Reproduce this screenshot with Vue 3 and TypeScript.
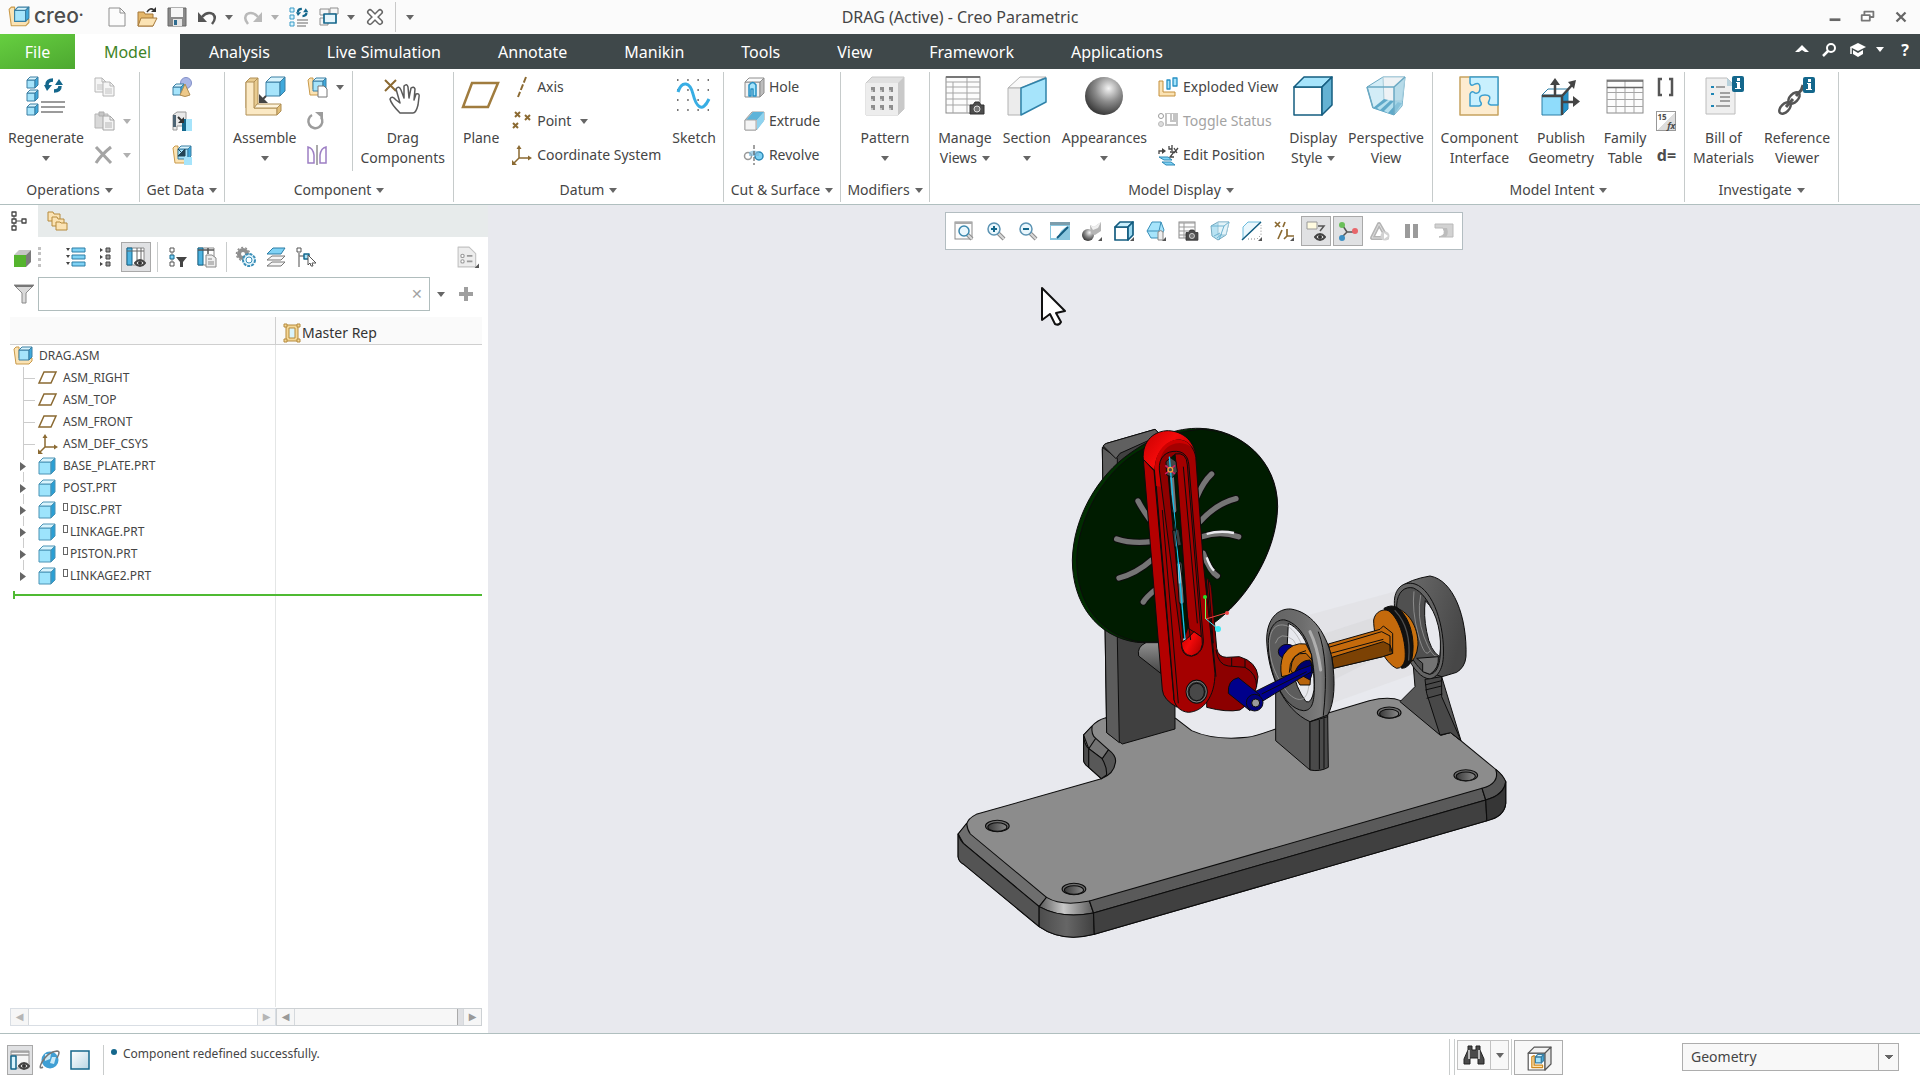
<script setup lang="ts">
import { h, ref } from 'vue'

/* ---------- icon building blocks ---------- */
type Pal = { f: string; t: string; s: string; k: string }
const BLUE: Pal = { f: '#a6e4fb', t: '#d9f4fd', s: '#3fa9dc', k: '#3a7fa3' }
const TAN: Pal = { f: '#fbe9c4', t: '#fdf3dc', s: '#e0bd78', k: '#b08f55' }
const GREY: Pal = { f: '#f1f1f1', t: '#fafafa', s: '#bdbdbd', k: '#8e8e8e' }
const GREEN: Pal = { f: '#55b42e', t: '#c6c6c6', s: '#7b7b7b', k: 'none' }

const cube = (x: number, y: number, s: number, d: number, p: Pal, w = 1) =>
  `<g stroke="${p.k}" stroke-width="${w}" stroke-linejoin="round">` +
  `<path fill="${p.f}" d="M${x} ${y + d}h${s - d}v${s - d}h${d - s}z"/>` +
  `<path fill="${p.t}" d="M${x} ${y + d}l${d} ${-d}h${s - d}l${-d} ${d}z"/>` +
  `<path fill="${p.s}" d="M${x + s - d} ${y + d}l${d} ${-d}v${s - d}l${-d} ${d}z"/></g>`
const line = (d: string, c = '#555', w = 1, extra = '') =>
  `<path d="${d}" fill="none" stroke="${c}" stroke-width="${w}" ${extra}/>`
const fill = (d: string, c: string, k = 'none', w = 1) =>
  `<path d="${d}" fill="${c}" stroke="${k}" stroke-width="${w}" stroke-linejoin="round"/>`
const lens = (mark: string) =>
  line('M12 12l6 6', '#8d8d8d', 4) + line('M12 12l6 6', '#d8d8d8', 2) +
  `<circle cx="8" cy="8" r="6" fill="#eaf7fd" stroke="#5b93b3" stroke-width="1.5"/>` + mark
const corner = fill('M20 20v-4l-4 4z', '#555')
const page = (x: number, y: number) =>
  fill(`M${x} ${y}h7l4 4v10h-11z`, '#f3f3f3', '#a6a6a6') + line(`M${x + 7} ${y}v4h4`, '#a6a6a6') +
  line(`M${x + 2} ${y + 7}h7M${x + 2} ${y + 9}h7M${x + 2} ${y + 11}h7`, '#b4b4b4')
const camera = (x: number, y: number) =>
  fill(`M${x} ${y + 3}h3l2-3h4l2 3h3v9h-14z`, '#4d4d4d', '#333') +
  `<circle cx="${x + 7}" cy="${y + 7}" r="3" fill="#777" stroke="#ddd"/>`
const eye = (x: number, y: number) =>
  fill(`M${x} ${y}q5-6 10 0q-5 6-10 0z`, '#fff', '#444', 2) + `<circle cx="${x + 5}" cy="${y}" r="2" fill="#333"/>`
const asm = (x: number, y: number, s: number) =>
  fill(`M${x} ${y + 2}l2-2h3v${s - 7}h${s - 7}l2 0v3l-3 3h-${s - 5}z`, '#fbe3b4', '#c99a4a') +
  cube(x + 5, y, s - 5, 3, BLUE)
const arrows =
  line('M3 8Q3 3 9 3', '#14678c', 3.5) + fill('M0 8h8L3 14z', '#14678c') +
  line('M16 9Q16 14 10 14', '#14678c', 3.5) + fill('M11 8h8L15 2z', '#14678c')
const sync = (x: number, y: number, k = 1) => `<g transform="translate(${x} ${y}) scale(${k})">${arrows}</g>`
const info = (x: number, y: number) =>
  `<rect x="${x}" y="${y}" width="12" height="16" rx="2" fill="#14678c"/>` +
  fill(`M${x + 5} ${y + 2}h3v3h-3zM${x + 4} ${y + 6}h4v6h1v1h-6v-1h2v-5h-1z`, '#fff')
const table = (x: number, y: number, w: number, hh: number) =>
  `<rect x="${x}" y="${y}" width="${w}" height="${hh}" fill="#fcfcfc" stroke="#8a8a8a"/>`
const csys = (w: number) =>
  line('M7 2v11h11M7 13l-6 6', '#8b6a32', w) + fill('M4.500 4l2.500-4 2.500 4zM16 10.500l4 2.500-4 2.500zM0 20v-5l5 5z', '#8b6a32')
const glass =
  fill('M1 5l7-4h11l-3 13-8 5-6-4z', '#b9e3f3', '#76a9bf') + fill('M8 1h11l-3 13h-8z', '#e3f3f9', '#9cc5d6') +
  line('M1 5h13l5-4M14 5l-5 14M4 15l6-3M7 17l5-4', '#6fb4d1')

const large: Record<string, string> = {
  regenerate:
    cube(1, 1, 11, 3, BLUE) + cube(1, 14, 11, 3, BLUE) + cube(1, 28, 11, 3, BLUE) + sync(18, 1) +
    line('M15 26h24M15 31h24M15 36h22', '#9b9b9b', 2),
  assemble:
    fill('M1 6l4-4h8v26l-3 4H1z', '#e8cb90', '#b08f55') + fill('M1 6h8v26h23v7H1z', '#fbe9c4', '#b08f55') +
    fill('M9 32l3-4h24l-4 4z', '#fdf3dc', '#b08f55') + fill('M32 32l4-4v7l-4 4z', '#e0bd78', '#b08f55') + line('M9 6l4-4', '#b08f55') +
    cube(21, 1, 19, 5, BLUE) + line('M21 20l-4 4', '#444', 2) + fill('M14 18v9h9z', '#444'),
  drag:
    line('M2 4l11 11M13 4L2 15', '#8b6a32', 2) +
    fill('M17 37q-9-9-10-14q2-4 6 1l4 3l-4-14q3-4 5 1l3 8v-12q3-3 4 1l1 11l2-10q3-2 4 1l-1 11l2-6q4-1 3 3l-1 8q-2 8-5 8z', '#fff', '#5a5a5a', 1.5),
  plane: line('M11 7h26L27 31H2z', '#a07c3e', 2.5),
  sketch:
    line('M3 4h32M3 14h32M3 24h32M3 34h32', '#444', 1.5, 'stroke-dasharray="1.500 8.700"') +
    line('M4 16C8 4 16 6 19 18S28 38 35 23', '#38aee4', 3),
  pattern:
    fill('M1 7l6-6h32v32l-6 6H1z', '#e0e0e0', '#c8c8c8') + fill('M33 7l6-6v32l-6 6z', '#c9c9c9') + fill('M1 7h32v32H1z', '#ededed') +
    [11, 20, 29].map(y => [6, 15, 24].map(x => fill(`M${x} ${y}h4v5h-4z`, '#8e8e8e') + fill(`M${x} ${y + 3}h2v2h-2z`, '#c4c4c4')).join('')).join(''),
  views:
    table(1, 1, 34, 36) + line('M1 6h34M1 11h34M1 17h34M1 23h34M1 29h34M8 6v31M22 1v36', '#a5a5a5') +
    line('M1 1h34', '#777', 2) + camera(25, 26),
  section:
    fill('M1 12L13 1h26L14 12z', '#f9f9f9', '#b2b2b2') + fill('M1 12h13v27H1z', '#ececec', '#b2b2b2') +
    fill('M14 12L39 2v24L14 39z', '#a6e4fb', '#2f82a9', 1.5),
  appearances: '<circle cx="20" cy="20" r="19" fill="url(#g-ball)"/>',
  display: cube(1, 1, 38, 10, { f: '#fff', t: '#a6e4fb', s: '#64b2d3', k: '#155d80' }, 1.5),
  perspective:
    fill('M1 11L17 1h22l-3 29-8 9L7 32z', '#d3edf7', '#6ba9c3') + fill('M17 1h22l-3 24H18z', '#eef2f5', '#a9cbd8') +
    fill('M7 32l11-9 18 4-8 12z', '#5fa9c9') + fill('M11 32l11-8h3L14 34zM18 35l10-10 4 1-10 11z', '#b4dfee') +
    fill('M28 11L39 1l-3 29-8 9z', '#9ccfe3aa') + line('M1 11h27L39 1M28 11v28M1 11l6 21', '#6ba9c3', 1.500),
  interface:
    fill('M1 1h38v38H1z', '#fdecd0', '#c6a35f', 1.5) +
    fill('M11 1h28v28h-7q-4-1-2-4q3-6-4-6t-5 6q3 4-1 5h-9V18q2-4 5-1q5 1 5-5t-5-4q-4 3-5-1z', '#c9f0fe', '#3b9fd0', 1.5),
  publish:
    cube(1, 13, 26, 6, { f: '#8fdcfb', t: '#fff', s: '#2592c9', k: '#2a7ea6' }) +
    line('M14 20V6M1 20h20M21 20L32 8M21 26h14M21 20v19', '#444', 2.5) +
    fill('M9 9l5-7 5 7zM27 6l8-2-2 9zM32 20l7 5.500-7 5.500z', '#444'),
  family:
    table(2, 4, 36, 33) + line('M2 16.500h36M2 23.500h36M2 30.500h36M11 11v26M20 4v33M29 11v26', '#a5a5a5') +
    line('M2 5h36M2 11.500h36', '#666', 1.500),
  bill:
    fill('M2 2h21l8 8v28H2z', '#efefef', '#bcbcbc') + fill('M23 2v8h8z', '#b9d2dc') + info(28, 0) +
    line('M12 11h9M16 17h10M16 21h10M16 25h10M12 30h14', '#888', 1.5) + fill('M7 10h3v2H7zM7 17h3v2H7zM7 29h3v2H7z', '#1e85b5'),
  reference:
    '<g fill="none" stroke="#555" stroke-width="2.5"><ellipse cx="8" cy="32" rx="7" ry="4" transform="rotate(-45 8 32)"/><ellipse cx="17" cy="22" rx="7" ry="4" transform="rotate(-45 17 22)"/></g>' +
    line('M9 31l7-8M19 20l7-8M24 15l2-6', '#555', 3) + info(26, 1),
}

const small: Record<string, string> = {
  copy: `<g opacity=".8">${page(1, 1)}${page(9, 5)}</g>`,
  paste: fill('M1 3h13v14H1z', '#d9d9d9', '#b5b5b5') + fill('M5 1h5v4H5z', '#c6c6c6', '#adadad') + page(9, 5),
  delete: line('M2 2l15 16M17 2Q7 10 2 18', '#a4a4a4', 3),
  shapes: '<circle cx="14" cy="6" r="5.500" fill="#aab6e6" stroke="#8390c8"/>' + cube(1, 7, 11, 3, BLUE) + fill('M13 7l5 11q-5 3-10 0z', '#edc98a', '#b08f55'),
  shrink: fill('M1 4l4-3h9v14H5v4H1z', '#e9e9e9', '#999') + fill('M1 4h3v12H1z', '#4d6474') + fill('M10 8h10v12H10z', '#a6e4fb') + fill('M10 8h4v12h-4z', '#14678c') + line('M6 6l5 5', '#333', 2) + fill('M12 6v6H6z', '#333'),
  importasm: asm(1, 1, 18) + fill('M12 12h8v8h-8z', '#a6e4fb') + fill('M13 4v7H6zM6 4l4 4', '#245', '#245'),
  create: asm(1, 1, 18) + fill('M11 9h6l3 3v8h-9z', '#fff', '#777'),
  repeat: line('M5 4A7 7 0 1 0 14 6', '#9c9c9c', 2.5) + fill('M8 1h8v7z', '#9c9c9c'),
  mirror: line('M10 0v20', '#555') + line('M1 2q5 1 6 8v8H1zM19 2q-5 1-6 8v8h6z', '#9d7fc4', 1.5),
  axis: line('M14 0L6 20', '#8b6a32', 2, 'stroke-dasharray="6 2"'),
  point: line('M3 1l5 5M8 1L3 6M13 4l5 5M18 4l-5 5M1 12l5 5M6 12l-5 5', '#8b6a32', 2),
  csys: csys(1.5),
  hole: cube(1, 1, 19, 4, GREY) + fill('M5 8q4-5 7 0v11H9v-7H7v7H5z', '#a6e4fb', '#2690c4', 1.5),
  extrude: fill('M1 9L8 1h12v8l-8 10H1z', '#d5d5d5', '#9a9a9a') + fill('M2 9l7-8h11l-7 8z', '#5db3d9') + fill('M13 9l7-8v9l-7 9z', '#8fd3ef') + fill('M1 9h11v10H1z', '#f4f4f4', '#a8a8a8'),
  revolve: '<circle cx="4" cy="11" r="3.500" fill="#fff" stroke="#999" stroke-width="1.500"/><circle cx="15" cy="11" r="4" fill="#7fd2f5" stroke="#2c88b5" stroke-width="1.500"/>' + fill('M5 7q5-3 10 0v4H5z', '#7cb9d9aa') + line('M10 0v20', '#444', 1, 'stroke-dasharray="4 2"'),
  exploded: fill('M1 4h4v11h12v4H1z', '#fbe3b4', '#c4903c') + fill('M9 3h3v9H9zM15 1h4v8h-4z', '#a6e4fb', '#2690c4', 1.3),
  toggle: '<circle cx="3" cy="5" r="2.500" fill="none" stroke="#999"/><circle cx="3" cy="13" r="2.500" fill="#ddd" stroke="#bbb"/>' + fill('M7 2h13v13H7z', '#c4c4c4') + fill('M9 3v10h9v-2h-6V3zM14 3h1v6h-1z', '#fff'),
  editpos: line('M1 9V6h4M11 1v3h3M14 0v6M12 7h4l-4 5h4M16 3l3 5M20 3l-4 5', '#444', 1.3) + fill('M4 3l4 3-4 3z', '#444') + fill('M1 12h9l4 3H6zM4 17h9l4 3H8z', '#7fd2f5', '#2c88b5'),
  brackets: line('M6 2H3v16h3M13 2h3v16h-3', '#555', 2.5),
  expand: [3, 10, 17].map(y => fill(`M6 ${y - 2}h13v4H6z`, '#7fd2f5', '#2c7da5') + fill(`M0 ${y - 2}h4l-2 3z`, '#444')).join(''),
  collapse: [3, 10, 17].map(y => fill(`M10 ${y - 2}h4v4h-4z`, '#999', '#444') + fill(`M4 ${y - 2}l3 2-3 2z`, '#444')).join(''),
  columns: fill('M1 1h17v17H1z', '#fff', '#888') + fill('M1 1h5v17H1z', '#4fb3e0', '#14678c') + line('M1 4h17M11 1v12M15 1v12', '#666', 1) + eye(9, 16),
  filterTree: fill('M3 1h4v4H3zM3 15h4v4H3z', '#fff', '#555') + fill('M3 8h4v4H3z', '#7fd2f5', '#14678c') + line('M5 5v3M5 12v3', '#777') + fill('M9 10h11l-4 5v5h-3v-5z', '#444'),
  columnsPage: fill('M1 1h16v17H1z', '#fff', '#888') + fill('M1 1h5v17H1z', '#4fb3e0', '#14678c') + line('M1 3h16M11 1v6', '#555', 1.5) + fill('M9 8h6l4 3v9H9z', '#eee', '#888') + line('M11 12h4M11 15h6M11 17h6', '#888'),
  gears: '<circle cx="7" cy="7" r="4" fill="none" stroke="#8f8f8f" stroke-width="4"/><circle cx="7" cy="7" r="6.500" fill="none" stroke="#8f8f8f" stroke-width="1.500" stroke-dasharray="2 2"/><circle cx="13" cy="13" r="6" fill="#e2f5fd" stroke="#3b8fb8" stroke-width="2" stroke-dasharray="3 1"/><circle cx="13" cy="13" r="3" fill="#fff" stroke="#3b8fb8"/>',
  layers: fill('M1 19l5-4h13l-4 4z', '#f6f6f6', '#777') + fill('M1 13l5-4h13l-4 4z', '#f6f6f6', '#777') + fill('M1 7l6-6h12l-4 6z', '#7fd2f5', '#2c7da5'),
  selectTree: line('M3 6v14M3 9h6', '#888', 1.5) + fill('M1 1h4v4H1z', '#fff', '#555') + fill('M8 7h5v5H8z', '#a6e4fb', '#14678c', 1.5) + fill('M12 8l8 8-4 0 1 3-2 0-1-3-2 2z', '#fff', '#555'),
  settings: fill('M1 1h10l6 6v12H1z', '#ededed', '#c2c2c2') + line('M9 9h5M9 14h5', '#999', 1.5) + '<circle cx="5" cy="9" r="1.500" fill="#fff" stroke="#999"/><circle cx="5" cy="14" r="1.500" fill="#fff" stroke="#999"/>' + corner,
  greencube: cube(1, 3, 17, 5, GREEN, 0),
  funnel: fill('M0 1h20l-8 8v10H8V9z', '#dadada', '#8a8a8a') + line('M1 2h18', '#777', 2),
  plus: line('M10 3v14M3 10h14', '#9f9f9f', 4),
  folders: fill('M1 1h5l1 2h6v7H1z', '#fbe3b4', '#b58a3c') + fill('M5 6h5l1 2h6v7H5z', '#fbe3b4', '#b58a3c') + fill('M9 11h4l1 1h6v7H9z', '#fbe3b4', '#b58a3c'),
  treeTab: line('M5 5v11M5 10h9', '#555', 1) + fill('M3 1h4v4H3zM3 8h4v4H3zM3 15h4v4H3zM13 8h4v4h-4z', '#fff', '#444', 1.3),
  master: fill('M4 2h12v16H4z', '#f5d795', '#b58a3c') + fill('M7 5h6v10H7z', '#d9f4fd', '#b58a3c') + fill('M2 1h3v3H2zM15 1h3v3h-3zM2 16h3v3H2zM15 16h3v3h-3z', '#f5d795', '#b58a3c'),
  asm: asm(0, 1, 18),
  planeS: line('M6 4h12l-5 11H1z', '#8b6a32', 1.5),
  part: cube(1, 2, 16, 4, { f: '#9de4fc', t: '#d9f4fd', s: '#2b9fd4', k: '#4a93b5' }),
  zoomfit: table(1, 1, 17, 17) + line('M1 2h17', '#aaa', 2) + line('M13 13l5 5', '#8d8d8d', 4) + line('M13 13l5 5', '#d8d8d8', 2) + '<circle cx="10" cy="10" r="5" fill="#eaf7fd" stroke="#3a87ad" stroke-width="1.500"/>',
  zoomin: lens(line('M8 5v6M5 8h6', '#14678c', 2)),
  zoomout: lens(line('M5 8h6', '#14678c', 2)),
  repaint: fill('M0 1h20v18H0z', '#8ac6de') + fill('M0 1h20v3H0z', '#7c9dac') + fill('M1 5h17Q10 8 8 17H1z', '#fff') + line('M18 6L7 17', '#145d80', 2),
  shading: '<circle cx="6" cy="14" r="6" fill="url(#g-ball)"/>' + fill('M8 4l4 2 7-5v9l-6 4q-5 0-5-10z', '#b5b5b5') + fill('M8 4l4 2 7-5-3 6-5 2z', '#f0f0f0') + corner,
  dstyle: cube(1, 1, 18, 5, { f: '#fff', t: '#c9effc', s: '#9bd8f0', k: '#145d80' }, 1.7) + corner,
  orient: fill('M1 10L6 1h9l3 8-4 8H5z', '#a6e4fb', '#3b8fb8') + line('M1 10h12l2-9M13 10l1 7', '#3b8fb8') + fill('M12 11q3-3 5 0v8h-5z', '#eee', '#888') + corner,
  viewmgr: table(1, 1, 16, 16) + line('M1 2h16M1 6h16M1 10h16M1 14h16M6 2v15', '#999', 1) + `<g transform="translate(8 9) scale(.85)">${camera(0, 0)}</g>`,
  persp: glass,
  secview: fill('M1 6l5-5h13L1 18z', '#eaf7fd', '#6bbbdc') + line('M0 19L19 1', '#145d80', 1.5) + line('M6 18h9l4-4V4', '#888', 1, 'stroke-dasharray="1 2"') + corner,
  datumflt: line('M1 1l5 5M6 1L1 6M11 1L9 6M8 9l-4 9M13 8v7h7M13 15l-3 3', '#8b6a32', 1.700) + corner,
  annot: fill('M1 1h10v7H1z', '#fffbe0', '#999') + line('M12 5h6l-4 5', '#555', 1.5) + eye(9, 16),
  spin: line('M5 5l4 6M9 11l-5 5M9 11h8', '#555', 1.5) + '<circle cx="4" cy="4" r="3" fill="#6abf59"/><circle cx="4" cy="17" r="3" fill="#3d8fc4"/><circle cx="17" cy="10" r="3" fill="#e8666a"/>',
  simulate: line('M9 3L2 17h15z', '#b5b5b5', 4, 'stroke-linejoin="round"') + line('M9 3L2 17h15z', '#dedede', 1) + '<circle cx="15" cy="15" r="4.500" fill="#d2d2d2"/>' + fill('M14 12l4 3-4 3z', '#fff'),
  pause: fill('M3 3h5v14H3zM11 3h5v14h-5z', '#9b9b9b'),
  stress: fill('M1 3h18v13H5q8-2 4-9H1z', '#d2d2d2', '#bababa') + fill('M5 16q8-2 4-9h4q2 6-1 9z', '#bcbcbc'),
  new: fill('M2 1h11l5 5v13H2z', '#fcfcfc', '#8e8e8e') + line('M13 1v5h5', '#8e8e8e'),
  open: fill('M1 5h6l1 2h8v12H1z', '#e4b76b', '#a5793a') + fill('M4 11h16l-4 8H1z', '#fbe3b4', '#a5793a') + line('M10 5q3-5 7-2', '#333', 1.5) + fill('M14 5h5V0z', '#333'),
  save: fill('M1 1h18v18H1z', '#8a8a8a', '#666') + fill('M4 1h12v9H4z', '#f6f6f6') + fill('M6 12h9v7H6z', '#e5e5e5') + fill('M7 13h3v5H7z', '#2f6c90'),
  undo: line('M5 10Q10 4 16 7Q20 11 15 17', '#555', 2.5) + fill('M1 5v10h9z', '#555'),
  redo: line('M15 10Q10 4 4 7Q0 11 5 17', '#b9b9b9', 2.5) + fill('M19 5v10h-9z', '#b9b9b9'),
  regen: fill('M1 1h4v4H1zM1 8h4v4H1zM1 15h4v4H1z', '#d9f4fd', '#3a9bc7') + sync(7, 0, 0.65) + line('M8 13h11M8 16h11M8 19h9', '#999', 1.3),
  windows: fill('M1 2h9v6H1zM1 11h8v7H1zM11 1h8v6h-8z', '#f6f6f6', '#8e8e8e') + fill('M5 7h12v9H5z', '#e7f6fc', '#14678c', 1.7),
  closeWin: line('M5 5l10 10M15 5L5 15', '#666', 6, 'stroke-linecap="round"') + line('M5 5l10 10M15 5L5 15', '#fff', 3, 'stroke-linecap="round"'),
  logo: asm(1, 1, 18),
  up: fill('M3 12l7-7 7 7h-4l-3-2-3 2z', '#fff'),
  magnify: line('M3 16l5-5', '#fff', 2.500) + '<circle cx="11" cy="8" r="4" fill="none" stroke="#fff" stroke-width="2"/>',
  learn: fill('M2 7l8-4 8 4-8 4zM5 10l5 3 5-3v4l-5 3-5-3z', '#fff') + line('M3 7v7', '#fff', 1.5),
  min: line('M4 13h12', '#666', 3),
  restore: fill('M6 4h10v6H6z', '#fff', '#777', 2) + fill('M3 8h9v6H3z', '#fff', '#777', 2),
  close: line('M5 5l10 10M15 5L5 15', '#666', 2.500),
  navigator: fill('M1 1h18v17H1z', '#f5f5f5', '#999') + line('M1 2h18M1 5h18', '#999', 1.5) + fill('M1 6h5v13H1z', '#d9f4fd', '#14678c', 1.5) + eye(9, 16),
  globe: '<circle cx="10" cy="10" r="8.500" fill="#3f9fd4"/>' + fill('M5 4l6 0-1 5-5 2zM12 7l4 0-2 7-4-1z', '#c9e9f7') + line('M3 17Q-2 20 2 12Q8 2 17 1Q21 1 17 8', '#777', 1.500),
  screen: '<rect x="1" y="1" width="18" height="18" fill="url(#g-screen)" stroke="#14678c" stroke-width="1.500"/>',
  binoculars: fill('M4 1h4v4h4V1h4v4l4 9v5h-6v-6H6v6H0v-5l4-9z', '#4a4a4a', '#222') + line('M5 5v9M15 5v9', '#b5b5b5', 2),
  selbox: cube(1, 1, 19, 5, { f: '#fff', t: '#f2f2f2', s: '#e2e2e2', k: '#555' }) + fill('M4 9l2-1v8h7v2H4z', '#fbe3b4', '#d08a20') + cube(7, 7, 7, 2, BLUE),
}

const Icon = (p: { name: string; big?: boolean; size?: number }) => {
  const box = p.big ? 40 : 20
  const px = p.size ?? box
  return h('svg', {
    viewBox: `0 0 ${box} ${box}`, width: px, height: px, class: 'icon', 'aria-hidden': 'true',
    innerHTML: (p.big ? large : small)[p.name] ?? '',
  })
}
Icon.props = { name: String, big: Boolean, size: Number }

/* ---------- ribbon ---------- */
interface Item { icon: string; text?: string; name?: string; caret?: boolean; off?: boolean; glyph?: string }
interface Big { kind: 'big'; icon: string; lines: string[]; caret?: boolean }
interface Col { kind: 'col'; items: Item[] }
interface Sep { kind: 'sep' }
interface Group { key: string; title: string; parts: (Big | Col | Sep)[] }
const big = (icon: string, lines: string[], caret = false): Big => ({ kind: 'big', icon, lines, caret })
const col = (...items: Item[]): Col => ({ kind: 'col', items })

const groups: Group[] = [
  { key: 'operations', title: 'Operations', parts: [big('regenerate', ['Regenerate'], true),
    col({ icon: 'copy', name: 'Copy', off: true }, { icon: 'paste', name: 'Paste', caret: true, off: true }, { icon: 'delete', name: 'Delete', caret: true, off: true })] },
  { key: 'data', title: 'Get Data', parts: [
    col({ icon: 'shapes', name: 'User-Defined Feature' }, { icon: 'shrink', name: 'Copy Geometry' }, { icon: 'importasm', name: 'Shrinkwrap' })] },
  { key: 'component', title: 'Component', parts: [big('assemble', ['Assemble'], true),
    col({ icon: 'create', name: 'Create', caret: true }, { icon: 'repeat', name: 'Repeat', off: true }, { icon: 'mirror', name: 'Mirror Component' }),
    { kind: 'sep' }, big('drag', ['Drag', 'Components'])] },
  { key: 'datum', title: 'Datum', parts: [big('plane', ['Plane']),
    col({ icon: 'axis', text: 'Axis' }, { icon: 'point', text: 'Point', caret: true }, { icon: 'csys', text: 'Coordinate System' }),
    big('sketch', ['Sketch'])] },
  { key: 'cut', title: 'Cut & Surface', parts: [col({ icon: 'hole', text: 'Hole' }, { icon: 'extrude', text: 'Extrude' }, { icon: 'revolve', text: 'Revolve' })] },
  { key: 'modifiers', title: 'Modifiers', parts: [big('pattern', ['Pattern'], true)] },
  { key: 'display', title: 'Model Display', parts: [big('views', ['Manage', 'Views'], true), big('section', ['Section'], true), big('appearances', ['Appearances'], true),
    col({ icon: 'exploded', text: 'Exploded View' }, { icon: 'toggle', text: 'Toggle Status', off: true }, { icon: 'editpos', text: 'Edit Position' }),
    big('display', ['Display', 'Style'], true), big('perspective', ['Perspective', 'View'])] },
  { key: 'intent', title: 'Model Intent', parts: [big('interface', ['Component', 'Interface']), big('publish', ['Publish', 'Geometry']), big('family', ['Family', 'Table']),
    col({ icon: 'brackets', name: 'Parameters' }, { icon: 'relations', name: 'Switch Dimensions', glyph: 'fx' }, { icon: 'dequals', name: 'Relations', glyph: 'd=' })] },
  { key: 'investigate', title: 'Investigate', parts: [big('bill', ['Bill of', 'Materials']), big('reference', ['Reference', 'Viewer'])] },
]

const tabs = ['File', 'Model', 'Analysis', 'Live Simulation', 'Annotate', 'Manikin', 'Tools', 'View', 'Framework', 'Applications']
const activeTab = ref('Model')

const viewTools = [
  ['zoomfit', 'Refit'], ['zoomin', 'Zoom In'], ['zoomout', 'Zoom Out'], ['repaint', 'Repaint'], ['shading', 'Rendering'],
  ['dstyle', 'Display Style'], ['orient', 'Saved Orientations'], ['viewmgr', 'View Manager'], ['persp', 'Perspective'],
  ['secview', 'Sections'], ['datumflt', 'Datum Display'], ['annot', 'Annotation Display'], ['spin', 'Spin Center'],
  ['simulate', 'Simulate'], ['pause', 'Pause'], ['stress', 'Results'],
]
const pressed = ref(['annot', 'spin'])

/* ---------- model tree ---------- */
interface Node { name: string; icon: string; expand?: boolean; placed?: boolean }
const nodes: Node[] = [
  { name: 'ASM_RIGHT', icon: 'planeS' }, { name: 'ASM_TOP', icon: 'planeS' }, { name: 'ASM_FRONT', icon: 'planeS' },
  { name: 'ASM_DEF_CSYS', icon: 'csys' },
  { name: 'BASE_PLATE.PRT', icon: 'part', expand: true }, { name: 'POST.PRT', icon: 'part', expand: true },
  { name: 'DISC.PRT', icon: 'part', expand: true, placed: true }, { name: 'LINKAGE.PRT', icon: 'part', expand: true, placed: true },
  { name: 'PISTON.PRT', icon: 'part', expand: true, placed: true }, { name: 'LINKAGE2.PRT', icon: 'part', expand: true, placed: true },
]
const search = ref('')
const filter = ref('Geometry')

/* curved slots cut through the disc */
const slots = [
  'M470 262Q490 215 515 192', 'M480 335Q530 280 588 266', 'M485 380Q540 362 596 380', 'M490 430Q510 485 532 498',
  'M330 330Q305 295 294 273', 'M335 395Q275 402 230 387', 'M335 450Q290 490 237 504', 'M345 540Q320 560 310 576',
]
const holes = [[155, 438], [362, 627], [1214, 98], [1421, 286]]
</script>

<template>
  <div class="app">
    <svg width="0" height="0" class="defs" aria-hidden="true">
      <defs>
        <radialGradient id="g-ball" cx=".62" cy=".3" r=".7"><stop offset="0" stop-color="#f4f4f4" /><stop offset=".5" stop-color="#8d8d8d" /><stop offset="1" stop-color="#3c3c3c" /></radialGradient>
        <linearGradient id="g-screen" x2="1" y2="1"><stop offset="0" stop-color="#fff" /><stop offset="1" stop-color="#b9d6e4" /></linearGradient>
      </defs>
    </svg>

    <header class="title-bar">
      <div class="quick">
        <Icon name="logo" :size="22" />
        <span class="brand">creo<sup>•</sup></span>
        <button aria-label="New"><Icon name="new" /></button>
        <button aria-label="Open"><Icon name="open" /></button>
        <button aria-label="Save"><Icon name="save" /></button>
        <button class="drop" aria-label="Undo"><Icon name="undo" /><i class="caret" /></button>
        <button class="drop" aria-label="Redo" disabled><Icon name="redo" /><i class="caret" /></button>
        <button aria-label="Regenerate"><Icon name="regen" /></button>
        <button class="drop" aria-label="Windows"><Icon name="windows" /><i class="caret" /></button>
        <button aria-label="Close window"><Icon name="closeWin" /></button>
        <button class="customize" aria-label="Customize toolbar"><i class="caret" /></button>
      </div>
      <h1>DRAG (Active) - Creo Parametric</h1>
      <div class="window-buttons">
        <button aria-label="Minimize"><Icon name="min" :size="18" /></button>
        <button aria-label="Restore"><Icon name="restore" :size="18" /></button>
        <button aria-label="Close"><Icon name="close" :size="18" /></button>
      </div>
    </header>

    <nav class="tabs">
      <button v-for="t in tabs" :key="t" :class="{ file: t === 'File', active: t === activeTab }" @click="activeTab = t">{{ t }}</button>
      <div class="tab-tools">
        <button aria-label="Minimize ribbon"><Icon name="up" /></button>
        <button aria-label="Search commands"><Icon name="magnify" /></button>
        <button class="drop" aria-label="Learning"><Icon name="learn" /><i class="caret" /></button>
        <button class="help" aria-label="Help">?</button>
      </div>
    </nav>

    <section class="ribbon">
      <div v-for="g in groups" :key="g.key" :class="['group', g.key]">
        <div class="parts">
          <template v-for="(p, i) in g.parts" :key="i">
            <button v-if="p.kind === 'big'" class="big">
              <Icon :name="p.icon" big />
              <span class="lines">
                <span>{{ p.lines[0] }}</span>
                <span v-if="p.lines[1] || p.caret">{{ p.lines[1] }}<i v-if="p.caret" class="caret" /></span>
              </span>
            </button>
            <div v-else-if="p.kind === 'col'" class="col">
              <button v-for="it in p.items" :key="it.icon" :disabled="it.off" :aria-label="it.name">
                <span v-if="it.glyph" :class="['glyph', it.icon]">
                  <template v-if="it.icon === 'relations'"><small>15</small><em>fx</em></template>
                  <template v-else>{{ it.glyph }}</template>
                </span>
                <Icon v-else :name="it.icon" />
                <span v-if="it.text">{{ it.text }}</span>
                <i v-if="it.caret" class="caret" />
              </button>
            </div>
            <span v-else class="divider" />
          </template>
        </div>
        <button class="group-title">{{ g.title }}<i class="caret" /></button>
      </div>
    </section>

    <main class="work">
      <aside class="panel">
        <div class="panel-tabs">
          <button class="on" aria-label="Model Tree"><Icon name="treeTab" /></button>
          <button aria-label="Folder Browser"><Icon name="folders" /></button>
        </div>
        <div class="panel-tools">
          <button aria-label="Model"><Icon name="greencube" /></button>
          <span class="grip" />
          <button class="first" aria-label="Expand All"><Icon name="expand" /></button>
          <button aria-label="Collapse All"><Icon name="collapse" /></button>
          <button class="pressed" aria-label="Show Columns"><Icon name="columns" /></button>
          <span class="rule" />
          <button aria-label="Tree Filters"><Icon name="filterTree" /></button>
          <button aria-label="Tree Columns"><Icon name="columnsPage" /></button>
          <span class="rule" />
          <button aria-label="Options"><Icon name="gears" /></button>
          <button aria-label="Layers"><Icon name="layers" /></button>
          <button aria-label="Select"><Icon name="selectTree" /></button>
          <button class="last" aria-label="Tree Settings"><Icon name="settings" :size="22" /></button>
        </div>
        <div class="search">
          <Icon name="funnel" />
          <div class="field">
            <input v-model="search" type="text" aria-label="Filter tree" />
            <button aria-label="Clear" @click="search = ''">✕</button>
          </div>
          <button aria-label="Search options"><i class="caret" /></button>
          <button aria-label="Add filter"><Icon name="plus" /></button>
        </div>
        <div class="tree">
          <table>
            <thead>
              <tr><th class="main-col" aria-label="Name" /><th><span class="rep"><Icon name="master" />Master Rep</span></th></tr>
            </thead>
            <tbody>
              <tr><td><div class="node"><Icon name="asm" />DRAG.ASM</div></td><td /></tr>
              <tr v-for="(n, i) in nodes" :key="n.name">
                <td>
                  <div class="node child">
                    <svg class="branch" width="24" height="22" aria-hidden="true">
                      <path v-if="!n.expand" d="M9.5 0v22M9.5 11.500H21" />
                      <template v-else>
                        <path :d="i < nodes.length - 1 ? 'M9.5 0v5M9.5 17v5' : 'M9.5 0v5'" />
                        <polygon points="6,7 12,11.500 6,16" />
                      </template>
                    </svg>
                    <Icon :name="n.icon" />
                    <i v-if="n.placed" class="placed" />{{ n.name }}
                  </div>
                </td>
                <td />
              </tr>
            </tbody>
          </table>
          <div class="insert-here" />
        </div>
        <div class="scrollers">
          <div class="scroller idle"><button aria-label="Scroll left">◀</button><span class="track" /><button aria-label="Scroll right">▶</button></div>
          <div class="scroller"><button aria-label="Scroll left">◀</button><span class="track"><span class="thumb" /></span><button aria-label="Scroll right">▶</button></div>
        </div>
      </aside>

      <div class="viewport">
        <svg class="scene" viewBox="488 205 1432 828" role="img" aria-label="DRAG assembly">
          <defs>
            <linearGradient id="corner"><stop offset="0" stop-color="#5a5a5a" /><stop offset=".45" stop-color="#c8c8c8" /><stop offset="1" stop-color="#5a5a5a" /></linearGradient>
            <linearGradient id="cornerLow"><stop offset="0" stop-color="#4c4c4c" /><stop offset=".5" stop-color="#666" /><stop offset="1" stop-color="#404040" /></linearGradient>
            <linearGradient id="hole"><stop offset="0" stop-color="#3a3a3a" /><stop offset="1" stop-color="#8a8a8a" /></linearGradient>
            <linearGradient id="redTop" x2="1" y2=".6"><stop offset="0" stop-color="#c40000" /><stop offset=".5" stop-color="#f40a0a" /><stop offset="1" stop-color="#b80000" /></linearGradient>
            <linearGradient id="strut" x2="0" y2="1"><stop offset="0" stop-color="#909090" /><stop offset="1" stop-color="#444" /></linearGradient>
            <linearGradient id="tube"><stop offset="0" stop-color="#626262" /><stop offset=".5" stop-color="#6c6c6c" /><stop offset=".8" stop-color="#7c7c7c" /><stop offset="1" stop-color="#404040" /></linearGradient>
            <linearGradient id="band" x2="1" y2=".4"><stop offset="0" stop-color="#6e6e6e" /><stop offset="1" stop-color="#474747" /></linearGradient>
          </defs>

          <!-- base plate -->
          <g class="edges" transform="translate(940 680) scale(.37 .33333)">
            <path fill="#8c8c8c" d="M448 113Q425 120 411 138L388 165V240Q390 252 402 262L436 296 98 403Q76 415 72 432L49 462V530Q52 545 63 552L268 740Q330 788 417 763L1478 422Q1525 410 1529 370V305Q1520 285 1504 270L1410 184 1380 157 1355 166 1245 62Q1215 48 1160 62L1040 102 907 147Q850 170 830 172Q740 182 680 152L637 115Z" />
            <path fill="#6e6e6e" d="M72 430Q74 450 82 462L288 652 268 680 63 490 49 462Z" />
            <path fill="#545454" d="M49 462Q54 480 63 490L268 680V740L63 552Q50 545 49 530Z" />
            <path fill="url(#corner)" d="M288 652Q330 680 404 663L415 699Q330 718 268 680Z" />
            <path fill="url(#cornerLow)" d="M268 680Q330 718 415 699L417 763Q330 788 268 740Z" />
            <path fill="#5a5a5a" d="M404 663L1465 325 1475 360 415 699Z" />
            <path fill="#404040" d="M415 699L1475 360 1478 422 417 763Z" />
            <path fill="#555" d="M1465 325Q1514 310 1502 268Q1522 285 1529 305Q1525 345 1475 360Z" />
            <path fill="#363636" d="M1475 360Q1525 345 1529 305V370Q1526 410 1478 422Z" />
            <path fill="#555" d="M455 209Q478 228 474 248Q470 282 436 296L438 236Z" />
            <path fill="#747474" d="M411 138Q408 165 421 175L455 209 438 236 402 206 388 165Z" />
            <path fill="#4c4c4c" d="M388 165Q390 195 402 206V262Q388 252 388 240Z" />
            <path fill="#585858" d="M402 206L438 236Q452 262 450 285L436 296 402 262Z" />
            <path fill="none" d="M421 175L402 206" />
            <g v-for="([x, y], i) in holes" :key="i">
              <ellipse :cx="x" :cy="y" rx="32" ry="17" fill="#6d6d6d" />
              <ellipse :cx="x" :cy="y + 3" rx="26" ry="13" fill="url(#hole)" />
            </g>
          </g>

          <!-- post, disc and linkage -->
          <g class="edges" transform="translate(1040 410) scale(.33333)">
            <path fill="#404040" d="M187 118Q188 104 200 100L345 58 360 72 405 700V957L247 1002 200 968Z" />
            <path fill="#5c5c5c" d="M187 112L232 145V690L238 998 200 968 187 118Z" />
            <path fill="#606060" d="M190 108Q192 102 200 100L345 58 362 75 240 130 228 146Z" />
            <path fill="#002d00" d="M480 55C600 58 713 150 713 290C710 430 620 560 540 625C460 690 380 702 290 697C170 680 97 580 97 450C100 320 175 195 270 130C340 80 410 53 480 55Z" />
            <path fill="#001c00" d="M480 58C600 60 711 150 711 290C708 430 620 558 538 623C460 688 380 700 296 695C180 675 110 580 110 450C113 320 200 170 313 115Q400 62 480 58Z" />
            <g class="slots">
              <path v-for="d in slots" :key="d" :d="d" class="slot-edge" />
              <path v-for="d in slots" :key="d + 'f'" :d="d" class="slot-fill" />
              <path d="M500 372Q540 360 582 369M500 442Q510 470 522 482" class="gap" />
            </g>
            <path fill="url(#strut)" d="M318 698Q290 710 296 738L362 790V698Z" />
            <path fill="#8c0000" d="M500 505Q512 510 515 540L530 715Q535 742 560 742L598 740Q650 755 654 800 650 870 600 900Q560 908 500 892Z" />
            <path fill="none" d="M528 720Q535 765 565 768L615 772Q650 790 650 830M575 744V768M615 748V772" />
            <path fill="url(#redTop)" d="M310 150C305 90 345 62 385 62C430 64 468 95 468 150L440 150 345 182Z" />
            <path fill="#b40000" d="M310 148L342 182 402 870 412 892Q370 870 367 840Z" />
            <path fill="#a40000" d="M345 182C345 120 390 88 420 90C455 94 468 130 468 150L490 460 525 790C525 860 490 905 445 907C420 905 400 885 402 860Z" />
            <path class="plain" fill="#cc0000" d="M345 182C343 120 385 86 420 89Q445 92 455 112Q440 100 420 99C380 100 356 130 358 180L362 230 349 228Z" />
            <path fill="#8f0000" d="M358 180C355 140 380 122 410 124C440 126 446 150 447 170L490 690C492 720 470 740 450 738C430 736 425 720 424 700Z" />
            <path fill="#001c00" d="M384 190Q384 140 405 134L412 160 443 655 430 690Z" />
            <path fill="#a40000" d="M405 132Q440 125 442 165L484 680 445 655 412 195Z" />
            <path class="slot-edge narrow" d="M396 205L403 302M418 462L425 575" />
            <path class="slot-fill narrow" d="M396 205L403 302M418 462L425 575" />
            <path class="gap" d="M417 462L420 520M430 688L438 690" />
            <path fill="#3f3f3f" d="M398 362L416 358 424 405 404 412Z" />
            <path fill="url(#redTop)" d="M424 698Q440 690 462 665L486 682Q494 728 455 738Q426 735 424 698Z" />
            <path fill="#474747" d="M378 155L392 143 408 155 412 185 398 202 380 195Z" />
            <path class="axis-line" d="M388 140L435 688" />
            <path class="pick-cross" d="M376 166L405 192M405 166L376 192" />
            <circle cx="391" cy="179" r="7" fill="#474747" class="ring-mark" />
            <path fill="none" d="M367 300L415 880M392 255L452 690M430 170L472 640M500 520L528 800M505 510L520 700" />
            <ellipse cx="470" cy="845" rx="32" ry="35" fill="#2a2a2a" />
            <ellipse cx="470" cy="845" rx="29" ry="31" fill="none" class="pale" />
            <ellipse cx="470" cy="846" rx="23" ry="26" fill="#484848" />
          </g>

          <!-- yokes, piston and crank -->
          <g class="edges" transform="translate(1200 560) scale(.33333)">
            <path class="clear" fill="#dfe0e3" d="M290 175L590 93 660 335 400 428Z" />
            <path class="clear" fill="#d8d9dc" d="M330 235L590 150 620 250 400 360Z" />
            <path fill="url(#band)" d="M600 82Q630 58 690 48C760 60 802 170 798 290Q795 322 770 337L700 358Z" />
            <path fill="#565656" d="M640 320L645 380 600 425 720 525 752 518 783 542 725 350Z" />
            <path fill="#484848" d="M675 358L680 400 720 525 752 518 783 542 725 410V350Z" />
            <path fill="none" d="M675 375L725 362M676 390L725 378M680 415L727 402" />
            <path fill="#646464" d="M583 130C582 85 610 62 645 72C700 90 735 200 730 290C728 340 700 362 680 355C630 340 585 220 583 130Z" />
            <path fill="#505050" d="M590 135C592 95 615 78 640 84C690 105 725 200 720 290C718 320 705 350 680 340C640 325 592 220 590 135Z" />
            <path fill="#e8e9ee" d="M676 122C712 155 728 230 719 290Q690 272 680 215 670 165 676 122Z" />
            <path class="pale" fill="none" d="M642 94Q635 150 655 225T690 272M662 105Q650 170 672 230T712 290" />
            <path fill="#737373" d="M650 295L715 290Q718 325 690 343L668 335V310Z" />
            <path fill="#c8710f" d="M580 142C625 150 655 200 654 255Q650 300 622 315Z" />
            <path fill="#111" d="M552 145Q575 132 592 143C630 170 648 240 635 300Q625 325 605 325Z" />
            <path class="soft dim" fill="none" d="M585 152Q635 205 626 300" />
            <path fill="#c46a0c" d="M521 180C525 155 550 145 565 152C600 175 620 250 615 300Q608 325 590 325C555 310 520 240 521 180Z" />
            <path fill="#c46a0c" d="M385 252L540 208 550 198 578 220V280L548 290 400 325Z" />
            <path fill="#7c4204" d="M396 292L550 245 570 255 578 280 548 290 400 325Z" />
            <path fill="none" d="M386 262L545 215 570 228V275M392 280L550 238" />

            <path fill="#5c5c5c" d="M227 380V542L330 630V470L260 400Z" />
            <path fill="#4a4a4a" d="M330 485V630Q360 636 385 622L383 460Z" />
            <path fill="url(#tube)" d="M200 240C200 175 235 145 272 147C330 155 375 210 395 290C408 370 403 430 383 465L330 485C250 450 203 340 200 240Z" />
            <path fill="#5c5c5c" d="M205 250C205 200 230 176 255 180C310 195 345 270 343 380C343 430 335 452 310 452C250 445 205 340 205 250Z" />
            <path fill="#e8e9ee" d="M265 190C320 215 345 300 342 390Q335 432 318 425Q285 380 280 330L262 250Z" />
            <path class="pale" fill="none" d="M208 250C210 200 235 188 262 198C300 220 328 290 326 380C320 430 290 425 265 400C225 350 208 300 208 250ZM226 250Q240 210 280 240 320 300 326 375" />
            <path fill="none" d="M355 215Q388 300 370 467M330 485L383 470M358 480V628M372 475V626" />
            <path class="soft" fill="none" d="M330 215Q352 260 362 330" />
            <ellipse cx="262" cy="275" rx="27" ry="22" fill="#00008b" />
            <path fill="#cf730e" d="M318 252Q275 245 250 285 238 315 245 350L290 340 335 320V285Z" />
            <path fill="#b8640c" d="M272 330Q275 275 318 280L336 300 330 375H300Z" />
            <path fill="none" d="M268 338Q268 282 318 272" />
            <path fill="#00006c" d="M285 335Q300 300 330 300L340 330 330 360Z" />
            <path fill="#00008b" d="M165 395L295 330 335 315V335L300 355 185 425Z" />
            <path fill="none" d="M185 402L320 335" />
            <path fill="#00008b" d="M85 400Q82 360 115 353L180 405 150 452Z" />
            <circle cx="164" cy="428" r="25" fill="#00007a" />
            <circle cx="167" cy="429" r="12" fill="#9a9a9a" />
          </g>

          <g class="triad">
            <path stroke="#6bff5c" d="M1205.500 619V597" /><path stroke="#f04848" d="M1206 619L1226 613" /><path stroke="#3fe9f5" d="M1206 619L1217 628" />
            <circle cx="1205" cy="597" r="2" fill="#29e329" /><circle cx="1227" cy="613" r="2" fill="#f04848" /><circle cx="1218" cy="629" r="3" fill="#3fe9f5" />
          </g>
          <path class="pointer" d="M1042 288L1065 311 1056 313 1061 322Q1059 326 1055 324L1050 314 1042 320Z" />
        </svg>
        <div class="view-tools" role="toolbar" aria-label="Graphics toolbar">
          <button v-for="[ic, label] in viewTools" :key="ic" :aria-label="label" :class="{ pressed: pressed.includes(ic) }"><Icon :name="ic" /></button>
        </div>
      </div>
    </main>

    <footer class="status">
      <button class="nav pressed" aria-label="Navigator"><Icon name="navigator" /></button>
      <button class="nav" aria-label="Browser"><Icon name="globe" /></button>
      <button class="nav" aria-label="Full Screen"><Icon name="screen" /></button>
      <span class="rule" />
      <p><i class="dot" />Component redefined successfully.</p>
      <span class="rule double" />
      <div class="find"><button aria-label="Find"><Icon name="binoculars" /></button><button aria-label="Find options"><i class="caret" /></button></div>
      <span class="rule" />
      <button class="region" aria-label="3D box selection"><Icon name="selbox" :size="24" /></button>
      <select v-model="filter" aria-label="Selection filter"><option>Geometry</option></select>
    </footer>
  </div>
</template>

<style>
body { overflow: hidden; }
#app { min-height: 100vh; }
</style>

<style scoped>
.app { display: flex; flex-direction: column; min-height: 100vh; background: #fff; color: #454545; font: 14px/20px "Noto Sans", "Open Sans", sans-serif; }
.defs { position: absolute; }
button { display: flex; align-items: center; justify-content: center; padding: 0; border: 0; background: none; color: inherit; font: inherit; white-space: nowrap; }
button:disabled { color: #a3a3a3; }
.icon { flex: none; display: block; overflow: visible; }
.caret { display: inline-block; flex: none; width: 0; height: 0; border: 4px solid transparent; border-top: 5px solid #666; border-bottom: 0; }
button:disabled .caret { border-top-color: #b0b0b0; }

.title-bar { display: grid; grid-template-columns: 1fr auto 1fr; align-items: center; height: 34px; background: #fbfbfb; }
.title-bar h1 { margin: 0; font-size: 16px; font-weight: 400; }
.quick { display: flex; align-items: center; gap: 10px; padding-left: 8px; }
.brand { display: flex; margin: -2px 14px 0 -6px; color: #4d4d4d; font: 500 21px/28px Inter, sans-serif; }
.brand sup { font-size: 8px; line-height: 24px; }
.drop { gap: 8px; }
.customize { height: 30px; padding-left: 10px; border-left: 1px solid #c9c9c9; }
.window-buttons { display: flex; justify-content: flex-end; gap: 15px; padding-right: 10px; }

.tabs { display: flex; gap: 1px; height: 35px; background: #3f484a; color: #fff; font-size: 16px; }
.tabs > button { padding: 0 28px; }
.tabs > .file { width: 75px; margin-right: -1px; padding: 0; background: linear-gradient(160deg, #66cf40, #4da830); }
.tabs > .active { width: 105px; padding: 0; background: #fff; color: #3f8427; }
.tab-tools { display: flex; align-items: center; gap: 8px; margin-left: auto; padding: 0 8px 4px 0; }
.tab-tools .caret { border-top-color: #fff; }
.help { width: 14px; margin-left: 6px; font-weight: 700; }

.ribbon { display: flex; height: 135px; border-bottom: 1px solid #b0bfbf; background: #fff; }
.group { display: flex; flex: none; flex-direction: column; justify-content: space-between; box-sizing: border-box; margin: 3px 0 2px; border-right: 1px solid #c6cbcb; }
.operations { width: 140px; }
.data { width: 85px; }
.component { width: 229px; }
.datum { width: 270px; }
.cut { width: 117px; }
.modifiers { width: 89px; }
.display { width: 503px; }
.intent { width: 252px; }
.investigate { width: 154px; }
.parts { display: flex; justify-content: center; margin-top: -2px; }
.display .parts, .datum .parts { gap: 1px; }
.big { flex-direction: column; justify-content: flex-start; gap: 12px; padding: 6px 5px 0; }
.lines { display: flex; flex-direction: column; align-items: center; }
.lines > span { display: flex; align-items: center; justify-content: center; gap: 5px; height: 20px; }
.col { display: flex; flex-direction: column; padding: 0 5px; }
.col button { justify-content: flex-start; gap: 5px; height: 34px; }
.col .caret { margin-left: 4px; }
.divider { width: 1px; height: 100px; margin: 1px 3px 0; background: #c6cbcb; }
.glyph { width: 20px; color: #4d4d4d; font-weight: 700; text-align: center; }
.dequals { font-size: 16px; }
.relations { display: flex; flex-direction: column; box-sizing: border-box; height: 20px; border: 1px solid #999; background: linear-gradient(135deg, #fff 50%, #ddd 50%); font-size: 9px; line-height: 9px; }
.relations small { font-size: 8px; text-align: left; }
.relations em { text-align: right; }
.group-title { gap: 5px; height: 24px; }

.work { display: flex; flex: 1; min-height: 0; }
.panel { display: flex; flex: none; flex-direction: column; width: 488px; background: #fff; }
.panel-tabs { display: flex; height: 32px; background: #e7ebeb; }
.panel-tabs button { width: 38px; }
.panel-tabs .on { background: #fff; }
.panel-tools { display: flex; align-items: center; gap: 4px; height: 40px; padding: 0 7px 0 10px; }
.panel-tools button { width: 26px; height: 30px; }
.panel-tools .last { margin-left: auto; }
.panel-tools .first { margin-left: 18px; }
.panel-tools .rule { height: 30px; margin: 0 2px; }
.pressed { box-sizing: border-box; border: 1px solid #a9a9a9; background: #e0e1e3; }
.panel-tools .pressed { width: 30px; margin-left: -2px; }
.grip { width: 0; height: 20px; margin-left: -2px; border-left: 3px dotted #c2c2c2; }
.rule { width: 1px; background: #c9cccc; }
.search { display: flex; align-items: center; gap: 4px; height: 34px; padding: 0 10px 0 14px; }
.field { display: flex; flex: 1; box-sizing: border-box; height: 34px; border: 1px solid #b0bdbd; }
.field input { flex: 1; min-width: 0; padding: 0 8px; border: 0; outline: 0; background: none; font: inherit; }
.field button { width: 24px; color: #a3a3a3; }
.search > button { width: 14px; height: 20px; }
.search > button:last-child { width: 24px; margin-left: 2px; }

.tree { flex: 1; margin: 6px 6px 0 10px; background: linear-gradient(#e4e6e6, #e4e6e6) 265px 0 / 1px 100% no-repeat; }
table { width: 100%; border-collapse: collapse; table-layout: fixed; }
th { height: 27px; padding: 0; border-bottom: 1px solid #cfcfcf; background: #fafafa; font-weight: 400; text-align: left; }
.main-col { width: 265px; border-right: 1px solid #cfcfcf; }
.rep { display: flex; align-items: center; padding: 4px 0 0 6px; color: #333; }
td { height: 22px; padding: 0; }
.node { display: flex; align-items: center; gap: 5px; height: 22px; padding-left: 4px; font-size: 12px; line-height: 22px; }
.child { gap: 0; }
.child > .icon { margin-right: 5px; }
.branch { flex: none; }
.branch path { fill: none; stroke: #ccc; }
.branch polygon { fill: #666; }
.placed { width: 3px; height: 6px; margin: -6px 2px 0 0; border: 1px solid #666; }
.insert-here { height: 8px; margin: 4px 0 0 3px; border-left: 2px solid #4fba33; background: linear-gradient(#4fba33, #4fba33) 0 3px / 100% 2px no-repeat; }
.scrollers { display: flex; margin: 1px 6px 7px 10px; }
.scroller { display: flex; box-sizing: border-box; width: 206px; height: 18px; border: 1px solid #cdd1d4; }
.scroller.idle { flex: 1; border-color: #d9dee4; }
.scroller button { width: 17px; background: #f6f6f6; color: #999; font: 10px/16px "DejaVu Sans", sans-serif; }
.idle button { color: #b5b5b5; }
.track { flex: 1; border: solid #d5d9dd; border-width: 0 1px; background: #dfe0e3; }
.idle .track { background: #fff; }
.thumb { display: block; box-sizing: border-box; width: 97%; height: 16px; border-right: 1px solid #aaa; background: #f7f7f7; }

.viewport { position: relative; flex: 1; min-width: 0; background: #e8e9ee; }
.scene { position: absolute; inset: 0; width: 100%; height: 100%; }
.view-tools { position: relative; display: flex; align-items: center; gap: 2px; box-sizing: border-box; width: max-content; height: 38px; margin: 7px auto 0; padding: 0 3px; border: 1px solid #b3bdc1; background: #fff; }
.view-tools button { width: 30px; height: 30px; }
.edges > *, .edges > g > * { stroke: #0c0c0c; stroke-width: 3; stroke-linejoin: round; }
.edges .slots, .edges .plain { stroke: none; }
.edges .slot-edge { fill: none; stroke: #0c0c0c; stroke-width: 22; stroke-linecap: round; }
.edges .slot-fill { fill: none; stroke: #757575; stroke-width: 16; stroke-linecap: round; }
.edges .slot-edge.narrow { stroke-width: 18; }
.edges .slot-fill.narrow { stroke-width: 12; }
.edges .gap { fill: none; stroke: #e8e9ee; stroke-width: 7; }
.edges .axis-line { fill: none; stroke: #18bdea; stroke-width: 4; }
.edges .pick-cross { fill: none; stroke: #d81b60; stroke-width: 5; }
.edges .ring-mark { stroke: #f59a3c; stroke-width: 4; }
.edges .pale { stroke: #a8a8a8; stroke-width: 2; }
.edges .soft { stroke: #d4d4d4; stroke-width: 9; stroke-linecap: round; opacity: .6; }
.edges .dim { stroke: #777; stroke-width: 4; }
.edges .clear { stroke: none; opacity: .6; }
.triad path { stroke-width: 1; fill: none; }
.pointer { fill: #fff; stroke: #111; stroke-width: 2; stroke-linejoin: round; }

.status { display: flex; height: 46px; border-top: 1px solid #b0bfbf; background: #fff; }
.nav { width: 26px; height: 30px; margin: 11px 4px 0 0; }
.nav:first-child { margin-left: 7px; }
.status .rule { height: 36px; margin-top: 5px; }
.status .nav + .rule { height: 30px; margin: 11px 0 0 6px; }
.status p { display: flex; flex: 1; gap: 6px; margin: 10px 0 0 7px; font-size: 12px; }
.dot { width: 6px; height: 6px; margin-top: 5px; border-radius: 3px; background: #14678c; }
.status .double { width: 4px; border: 1px solid #c9cccc; border-width: 0 1px; background: none; }
.find { display: flex; height: 30px; margin: 6px 2px 0; }
.find button { box-sizing: border-box; width: 34px; border: 1px solid #c2c2c2; background: #f8f8f8; }
.find button + button { width: 18px; border-left: 0; }
.region { box-sizing: border-box; width: 49px; height: 35px; margin: 6px 119px 0 2px; border: 1px solid #adadad; background: #f8f8f8; }
select { box-sizing: border-box; width: 217px; height: 28px; margin: 9px 21px 0 0; padding: 0 28px 0 8px; border: 1px solid #adadad; border-radius: 0; appearance: none; color: inherit; font: inherit;
  background: linear-gradient(#adadad, #adadad) 195px 0 / 1px 100% no-repeat, linear-gradient(to bottom left, #666 50%, transparent 50%) 202px 11px / 4px 5px no-repeat, linear-gradient(to bottom right, #666 50%, transparent 50%) 206px 11px / 4px 5px no-repeat, #f8f8f8; }
</style>
